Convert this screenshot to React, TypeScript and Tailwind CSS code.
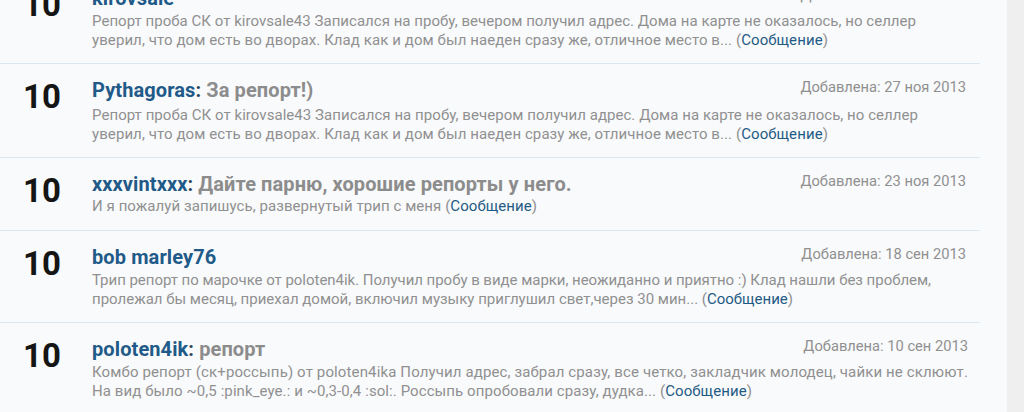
import React, { useLayoutEffect, useRef, useState } from "react";

type Line = { text: string; w: number };
type Row = {
  h: string;
  bodyMt: string;
  name: string;
  title?: string;
  date: string;
  lines: Line[];
};

const rows: Row[] = [
  {
    h: "h-[92px]",
    bodyMt: "mt-[2px]",
    name: "kirovsale",
    date: "Добавлена: 28 ноя 2013",
    lines: [
      { text: "Репорт проба СК от kirovsale43 Записался на пробу, вечером получил адрес. Дома на карте не оказалось, но селлер", w: 824 },
      { text: "уверил, что дом есть во дворах. Клад как и дом был наеден сразу же, отличное место в... ", w: 736 },
    ],
  },
  {
    h: "h-[94px]",
    bodyMt: "mt-[4px]",
    name: "Pythagoras",
    title: "За репорт!)",
    date: "Добавлена: 27 ноя 2013",
    lines: [
      { text: "Репорт проба СК от kirovsale43 Записался на пробу, вечером получил адрес. Дома на карте не оказалось, но селлер", w: 826 },
      { text: "уверил, что дом есть во дворах. Клад как и дом был наеден сразу же, отличное место в... ", w: 736 },
    ],
  },
  {
    h: "h-[73px]",
    bodyMt: "mt-[1px]",
    name: "xxxvintxxx",
    title: "Дайте парню, хорошие репорты у него.",
    date: "Добавлена: 23 ноя 2013",
    lines: [{ text: "И я пожалуй запишусь, развернутый трип с меня ", w: 445 }],
  },
  {
    h: "h-[92px]",
    bodyMt: "mt-[2px]",
    name: "bob marley76",
    date: "Добавлена: 18 сен 2013",
    lines: [
      { text: "Трип репорт по марочке от poloten4ik. Получил пробу в виде марки, неожиданно и приятно :) Клад нашли без проблем,", w: 839 },
      { text: "пролежал бы месяц, приехал домой, включил музыку приглушил свет,через 30 мин... ", w: 701 },
    ],
  },
  {
    h: "h-[94px]",
    bodyMt: "mt-[2px]",
    name: "poloten4ik",
    title: "репорт",
    date: "Добавлена: 10 сен 2013",
    lines: [
      { text: "Комбо репорт (ск+россыпь) от poloten4ika Получил адрес, забрал сразу, все четко, закладчик молодец, чайки не склюют.", w: 876 },
      { text: "На вид было ~0,5 :pink_eye.: и ~0,3-0,4 :sol:. Россыпь опробовали сразу, дудка... ", w: 660 },
    ],
  },
];

function FitLine({ target, last, text }: { target: number; last: boolean; text: string }) {
  const ref = useRef<HTMLSpanElement>(null);
  const [ls, setLs] = useState(0);
  useLayoutEffect(() => {
    const measure = () => {
      const el = ref.current;
      if (!el) return;
      const prev = el.style.letterSpacing;
      el.style.letterSpacing = "0px";
      const w = el.getBoundingClientRect().width;
      el.style.letterSpacing = prev;
      const n = (el.textContent || "").length;
      if (n > 0) setLs((target - w) / n);
    };
    measure();
    if (document.fonts && document.fonts.ready) document.fonts.ready.then(measure);
  }, [target]);
  return (
    <div className="whitespace-nowrap">
      <span ref={ref} style={{ letterSpacing: `${ls}px` }}>
        {text}
        {last && (
          <>
            (<span className="text-[#1f5a85]">Сообщение</span>)
          </>
        )}
      </span>
    </div>
  );
}

function ListRow({ r }: { r: Row }) {
  return (
    <div className={`flex shrink-0 border-b border-[#dbe8f1] ${r.h}`}>
      <div className="w-[92px] shrink-0 pl-[23px] pt-[16px] text-[33px] font-bold leading-[33px] text-[#151515]">
        10
      </div>
      <div className="flex-1 pr-[14px] pt-[14px]">
        <div className="flex items-start justify-between">
          <div className="whitespace-nowrap text-[20px] font-bold leading-[24px] tracking-[0.1px]">
            <span className="text-[#1f5a88]">{r.name}</span>
            {r.title && (
              <>
                <span className="text-[#2b4458]">: </span>
                <span className="text-[#8c8c8c]">{r.title}</span>
              </>
            )}
          </div>
          <div className="whitespace-nowrap text-[14.7px] leading-[18px] text-[#909090]">
            {r.date}
          </div>
        </div>
        <div className={`${r.bodyMt} text-[15px] leading-[18.5px] text-[#909090]`}>
          {r.lines.map((l, i) => (
            <FitLine key={i} target={l.w} text={l.text} last={i === r.lines.length - 1} />
          ))}
        </div>
      </div>
    </div>
  );
}

export default function App() {
  return (
    <div
      className="flex h-[412px] w-[1024px] overflow-hidden"
      style={{ fontFamily: "Roboto, 'Noto Sans', sans-serif" }}
    >
      <div className="h-full w-[1007px] shrink-0 bg-[#f9fafc]">
        <div className="-mt-[28px] flex w-[980px] flex-col">
          {rows.map((r, i) => (
            <ListRow key={i} r={r} />
          ))}
        </div>
      </div>
      <div className="h-full flex-1 bg-[#efefef]" />
    </div>
  );
}
